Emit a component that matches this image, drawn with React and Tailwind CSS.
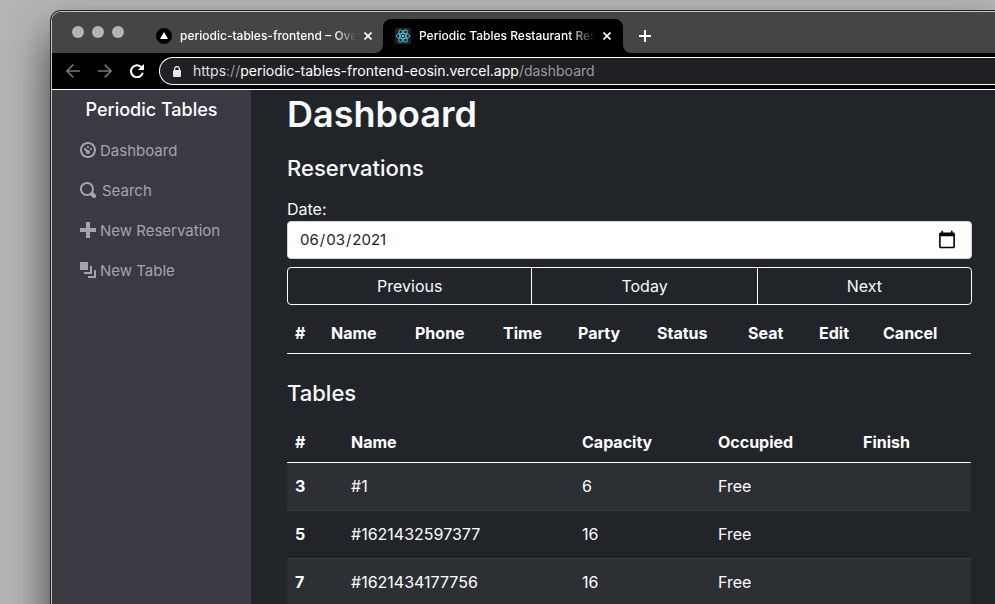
import React from 'react';

const icons = {
  dashboard:
    'M4 0c-2.2 0-4 1.8-4 4s1.8 4 4 4 4-1.8 4-4-1.8-4-4-4zm0 1c1.66 0 3 1.34 3 3s-1.34 3-3 3-3-1.34-3-3 1.34-3 3-3zm0 1c-.28 0-.5.22-.5.5s.22.5.5.5.5-.22.5-.5-.22-.5-.5-.5zm-1.66 1a.5.5 0 0 0-.19.84l.91.91c-.02.08-.06.16-.06.25 0 .55.45 1 1 1s1-.45 1-1-.45-1-1-1c-.09 0-.17.04-.25.06l-.91-.91a.5.5 0 0 0-.44-.16.5.5 0 0 0-.06 0zm3.16 0c-.28 0-.5.22-.5.5s.22.5.5.5.5-.22.5-.5-.22-.5-.5-.5z',
  search:
    'M3.5 0c-1.93 0-3.5 1.57-3.5 3.5s1.57 3.5 3.5 3.5c.59 0 1.17-.14 1.66-.41a1 1 0 0 0 .13.13l1 1a1.02 1.02 0 1 0 1.44-1.44l-1-1a1 1 0 0 0-.16-.13c.27-.49.44-1.06.44-1.66 0-1.93-1.55-3.5-3.5-3.5zm0 1c1.39 0 2.5 1.11 2.5 2.5 0 .66-.24 1.27-.66 1.72-.01.01-.02.02-.03.03a1 1 0 0 0-.13.13c-.44.4-1.04.63-1.69.63-1.39 0-2.5-1.11-2.5-2.5s1.11-2.5 2.5-2.5z',
  plus: 'M3 0v3h-3v2h3v3h2v-3h3v-2h-3v-3h-2z',
  layers: 'M0 0v4h4v-4h-4zm5 2v3h-3v1h4v-4h-1zm2 2v3h-3v1h4v-4h-1z',
};

const links = [
  { icon: 'dashboard', label: 'Dashboard', gap: 'gap-1' },
  { icon: 'search', label: 'Search', gap: 'gap-1.5' },
  { icon: 'plus', label: 'New Reservation', gap: 'gap-1' },
  { icon: 'layers', label: 'New Table', gap: 'gap-1' },
];

const reservationColumns = [
  ['#', 'w-9'],
  ['Name', 'w-[84px]'],
  ['Phone', 'w-[88px]'],
  ['Time', 'w-[75px]'],
  ['Party', 'w-[79px]'],
  ['Status', 'w-[91px]'],
  ['Seat', 'w-[71px]'],
  ['Edit', 'w-16'],
  ['Cancel', 'w-24'],
];

const tableColumns = [
  ['#', 'w-14'],
  ['Name', 'w-[231px]'],
  ['Capacity', 'w-[136px]'],
  ['Occupied', 'w-[145px]'],
  ['Finish', 'w-[116px]'],
];

const tables = [
  { id: 3, name: '#1', capacity: 6, status: 'Free' },
  { id: 5, name: '#1621432597377', capacity: 16, status: 'Free' },
  { id: 7, name: '#1621434177756', capacity: 16, status: 'Free' },
];

function CloseButton({ label }) {
  return (
    <button type="button" aria-label={label} className="shrink-0">
      <svg className="size-2" viewBox="0 0 8 8" fill="none" stroke="white" strokeWidth="1.6">
        <path d="M0.5 0.5l7 7M7.5 0.5l-7 7" />
      </svg>
    </button>
  );
}

function TabStrip() {
  return (
    <div className="flex h-[41px] items-end rounded-tl-[9px] bg-[#454545]">
      <div className="flex gap-2 self-start pt-3.5 pl-5">
        <span className="size-3 rounded-full bg-[#b4b4b4]" />
        <span className="size-3 rounded-full bg-[#b4b4b4]" />
        <span className="size-3 rounded-full bg-[#b4b4b4]" />
      </div>
      <div className="ml-5 flex h-[34px] w-[239px] items-center pr-[11px] pl-3">
        <svg className="size-4 shrink-0" viewBox="0 0 16 16">
          <circle cx="8" cy="8" r="8" fill="black" />
          <path d="M8 4l4 7H4z" fill="white" />
        </svg>
        <span className="mr-2 ml-2 min-w-0 flex-1 overflow-hidden mask-r-from-88% text-xs font-medium whitespace-nowrap">
          periodic-tables-frontend – Over
        </span>
        <CloseButton label="Close periodic-tables-frontend tab" />
      </div>
      <div className="relative flex h-[34px] w-60 items-center rounded-t-lg bg-black pr-3 pl-3">
        <svg className="absolute bottom-0 -left-2 size-2" viewBox="0 0 8 8">
          <path d="M8 0v8H0a8 8 0 0 0 8-8z" fill="black" />
        </svg>
        <svg className="absolute -right-2 bottom-0 size-2" viewBox="0 0 8 8">
          <path d="M0 0v8h8a8 8 0 0 1-8-8z" fill="black" />
        </svg>
        <svg className="size-4 shrink-0" viewBox="0 0 16 16" fill="none" stroke="#4fc3dc" strokeWidth="0.9">
          <rect width="16" height="16" rx="1.5" fill="#20232a" stroke="none" />
          <ellipse cx="8" cy="8" rx="6.8" ry="2.6" />
          <ellipse cx="8" cy="8" rx="6.8" ry="2.6" transform="rotate(60 8 8)" />
          <ellipse cx="8" cy="8" rx="6.8" ry="2.6" transform="rotate(120 8 8)" />
          <circle cx="8" cy="8" r="1.3" fill="#4fc3dc" stroke="none" />
        </svg>
        <span className="mr-2 ml-2 min-w-0 flex-1 overflow-hidden mask-r-from-85% text-xs font-medium whitespace-nowrap">
          Periodic Tables Restaurant Res
        </span>
        <CloseButton label="Close Periodic Tables tab" />
      </div>
      <button type="button" aria-label="New tab" className="flex h-[34px] items-center pl-4">
        <svg className="size-3" viewBox="0 0 12 12" fill="none" stroke="white" strokeWidth="2">
          <path d="M6 0v12M0 6h12" />
        </svg>
      </button>
    </div>
  );
}

function Toolbar() {
  return (
    <div className="flex h-[37px] items-center border-b border-white bg-black">
      <div className="flex items-center gap-[18px] pl-3.5">
        <button type="button" aria-label="Back">
          <svg className="size-3.5" viewBox="0 0 14 14" fill="none" stroke="#777" strokeWidth="1.5">
            <path d="M14 7H1M7.3 0.6L0.9 7l6.4 6.4" />
          </svg>
        </button>
        <button type="button" aria-label="Forward">
          <svg className="size-3.5" viewBox="0 0 14 14" fill="none" stroke="#777" strokeWidth="1.5">
            <path d="M0 7h13M6.7 0.6L13.1 7l-6.4 6.4" />
          </svg>
        </button>
        <button type="button" aria-label="Reload">
          <svg className="size-3.5" viewBox="0 0 14 14">
            <path d="M11.6 3.4A6 6 0 1 0 12.8 8.8" fill="none" stroke="white" strokeWidth="2" />
            <path d="M14 0v6H8z" fill="white" />
          </svg>
        </button>
      </div>
      <div className="ml-[15px] flex h-7 flex-1 items-center rounded-l-full border border-r-0 border-white bg-[#202124] pl-3 text-sm leading-5">
        <svg className="mr-[11px] h-[11px] w-2.5" viewBox="0 0 10 11">
          <path d="M2.6 5V3a2.4 2.4 0 0 1 4.8 0v2" fill="none" stroke="#e8e8e8" strokeWidth="1.3" />
          <rect x="1" y="4" width="8" height="7" rx="1" fill="#e8e8e8" />
        </svg>
        <a href="#dashboard" className="whitespace-nowrap text-[#9a9b9d]">
          <span className="text-[#e0e0e0]">https</span>://
          <span className="text-white">periodic-tables-frontend-eosin.vercel.app</span>/dashboard
        </a>
      </div>
    </div>
  );
}

function Sidebar() {
  return (
    <nav className="w-[199px] shrink-0 bg-[#3b3a43]">
      <a href="#home" className="block pt-1.5 text-center text-lg leading-7 font-medium">
        Periodic Tables
      </a>
      <ul className="mt-[7px] pl-7">
        {links.map(({ icon, label, gap }) => (
          <li key={label}>
            <a href={'#' + icon} className={'flex h-10 items-center whitespace-nowrap text-[15px] text-[#a5a5a9] ' + gap}>
              <svg className="mb-0.5 size-4 shrink-0" viewBox="0 0 8 8" fill="currentColor">
                <path d={icons[icon]} />
              </svg>
              {label}
            </a>
          </li>
        ))}
      </ul>
    </nav>
  );
}

function HeaderRow({ columns }) {
  return (
    <thead>
      <tr>
        {columns.map(([label, width]) => (
          <th key={label} scope="col" className={'border-b border-white px-2 py-2 text-left font-bold ' + width}>
            {label}
          </th>
        ))}
      </tr>
    </thead>
  );
}

function Dashboard() {
  return (
    <main className="min-w-0 flex-1 pr-[23px] pl-9 text-[#f8f9fa]">
      <h1 className="text-4xl leading-[48px] font-semibold">Dashboard</h1>
      <h2 className="mt-4 text-[22px] leading-7 font-medium">Reservations</h2>
      <label htmlFor="date" className="mt-[15px] block">
        Date:
      </label>
      <input
        id="date"
        type="date"
        defaultValue="2021-06-03"
        className="block h-[38px] w-full rounded border border-[#ced4da] bg-white pr-3 pl-[11px] text-[15px] text-[#212529] [&::-webkit-calendar-picker-indicator]:size-5"
      />
      <div role="group" aria-label="Change date" className="mt-2 flex h-[38px] divide-x divide-white rounded border border-white">
        <button type="button" className="flex-auto px-3">Previous</button>
        <button type="button" className="flex-auto px-3">Today</button>
        <button type="button" className="flex-auto px-3">Next</button>
      </div>
      <div className="pr-px">
        <table className="mt-2 w-full table-fixed border-separate border-spacing-0 text-white">
          <HeaderRow columns={reservationColumns} />
        </table>
        <h2 className="mt-[25px] text-[22px] leading-7 font-medium">Tables</h2>
        <table className="mt-[15px] w-full table-fixed border-separate border-spacing-0 text-white">
          <HeaderRow columns={tableColumns} />
          <tbody>
            {tables.map((row) => (
              <tr key={row.id} className="odd:bg-[#2c3034]">
                <th scope="row" className="h-12 border-b border-[#373b3e] px-2 pb-0.5 text-left font-bold">{row.id}</th>
                <td className="border-b border-[#373b3e] px-2 pb-0.5">{row.name}</td>
                <td className="border-b border-[#373b3e] px-2 pb-0.5">{row.capacity}</td>
                <td className="border-b border-[#373b3e] px-2 pb-0.5">{row.status}</td>
                <td className="border-b border-[#373b3e] px-2 pb-0.5" />
              </tr>
            ))}
          </tbody>
        </table>
      </div>
    </main>
  );
}

export default function App() {
  return (
    <div className="h-screen overflow-hidden bg-[#b5b5b7] pt-2.5 pl-[50px] font-['Inter','Liberation_Sans',sans-serif] text-base text-white">
      <div className="flex min-h-[120vh] flex-col rounded-tl-[11px] border-t border-l border-[#222] bg-[#212529] shadow-[0_24px_44px_rgba(0,0,0,0.65)]">
        <div className="flex flex-1 flex-col rounded-tl-[10px] border-t border-l border-[#c4c4c4]">
          <TabStrip />
          <Toolbar />
          <div className="flex flex-1">
            <Sidebar />
            <Dashboard />
          </div>
        </div>
      </div>
    </div>
  );
}
